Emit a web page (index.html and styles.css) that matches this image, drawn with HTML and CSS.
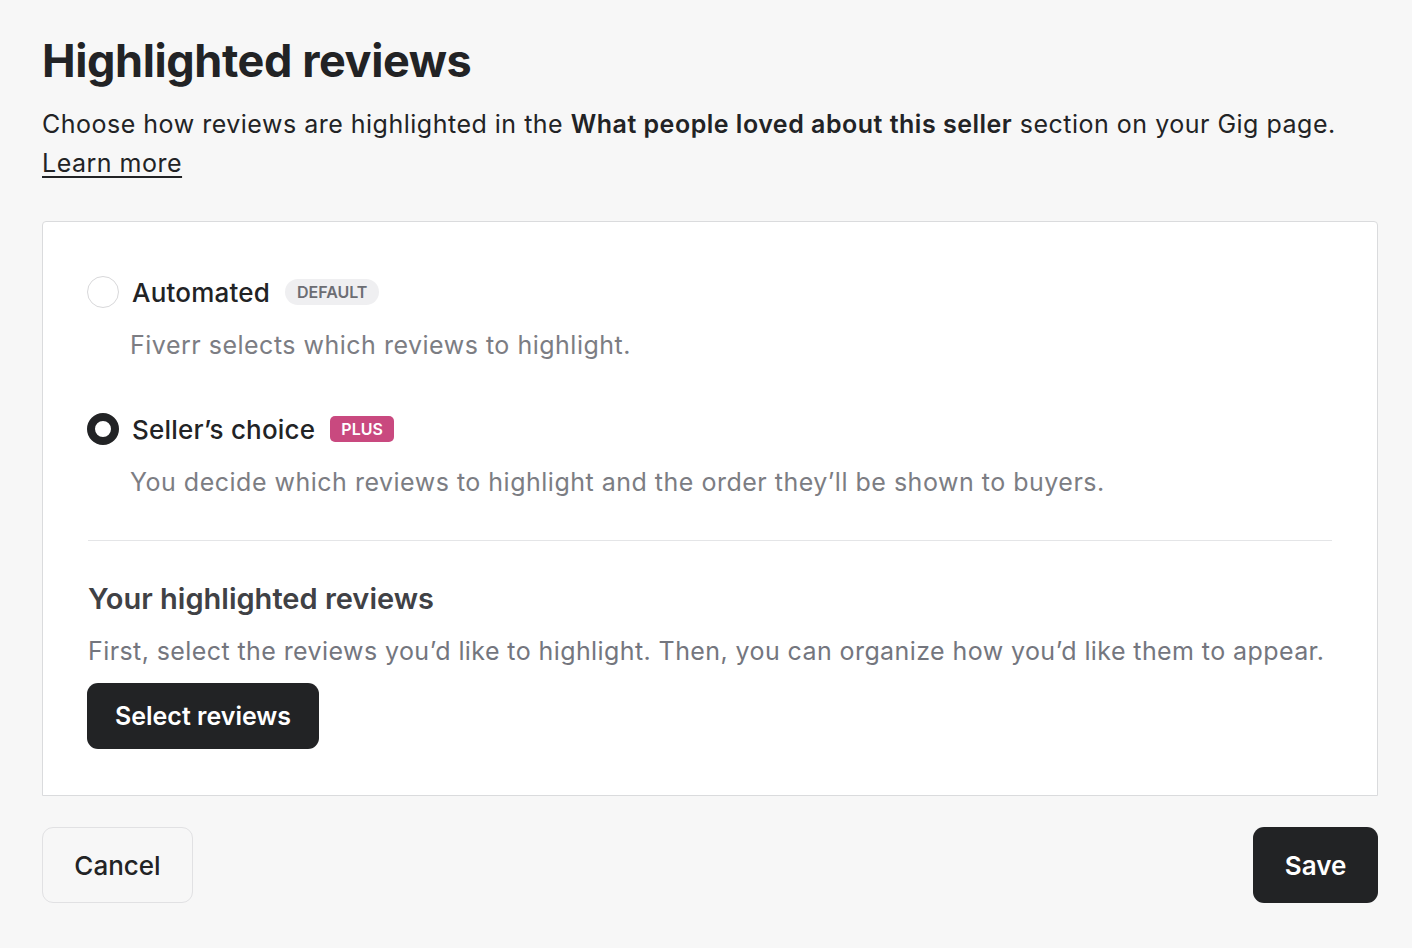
FILE: index.html
```html
<!DOCTYPE html>
<html lang="en">
<head>
<meta charset="utf-8">
<title>Highlighted reviews</title>
<link rel="stylesheet" href="styles.css">
</head>
<body>
<main class="page">
  <h1 class="title">Highlighted reviews</h1>
  <p class="intro">Choose how reviews are highlighted in the <strong>What people loved about this seller</strong> section on your Gig page.<br><a href="#" class="learn">Learn more</a></p>

  <section class="card">
    <div class="option">
      <div class="option-head">
        <span class="radio"></span>
        <span class="option-label">Automated</span>
        <span class="badge badge-default">DEFAULT</span>
      </div>
      <p class="option-desc">Fiverr selects which reviews to highlight.</p>
    </div>

    <div class="option option-second">
      <div class="option-head">
        <span class="radio radio-checked"></span>
        <span class="option-label">Seller’s choice</span>
        <span class="badge badge-plus">PLUS</span>
      </div>
      <p class="option-desc">You decide which reviews to highlight and the order they’ll be shown to buyers.</p>
    </div>

    <hr class="divider">

    <h2 class="sub-title">Your highlighted reviews</h2>
    <p class="sub-desc">First, select the reviews you’d like to highlight. Then, you can organize how you’d like them to appear.</p>
    <button class="btn btn-dark btn-select">Select reviews</button>
  </section>

  <footer class="actions">
    <button class="btn btn-light">Cancel</button>
    <button class="btn btn-dark btn-save">Save</button>
  </footer>
</main>
</body>
</html>
```

FILE: styles.css
```css
* { box-sizing: border-box; }

html, body {
  margin: 0;
  padding: 0;
  background: #f7f7f7;
}

body {
  font-family: Inter, "Noto Sans", "Liberation Sans", sans-serif;
  color: #222325;
}

.page {
  padding: 34px 34px 0 42px;
}

.title {
  margin: 0;
  font-size: 45px;
  line-height: 54px;
  font-weight: 700;
  letter-spacing: -0.4px;
  color: #222325;
}

.intro {
  margin: 17px 0 0;
  font-size: 25px;
  line-height: 39px;
  color: #222325;
  letter-spacing: 0.5px;
}

.intro strong {
  font-weight: 600;
}

.learn {
  color: #222325;
  text-decoration: underline;
  text-underline-offset: 4px;
}

.card {
  margin-top: 38px;
  background: #ffffff;
  border: 1px solid #dadbdd;
  border-radius: 4px 4px 0 0;
  padding: 54px 45px 46px;
}

.option-head {
  display: flex;
  align-items: center;
}

.radio {
  width: 32px;
  height: 32px;
  margin-left: -1px;
  border-radius: 50%;
  border: 1px solid #d8d8da;
  background: #fff;
  flex: 0 0 auto;
}

.radio-checked {
  border: 8px solid #222325;
}

.option-label {
  margin-left: 13px;
  font-size: 26px;
  font-weight: 500;
  letter-spacing: 0.2px;
  color: #222325;
}

.badge {
  margin-left: 15px;
  height: 26px;
  line-height: 26px;
  font-size: 16px;
  font-weight: 600;
  padding: 0 12px;
}

.badge-default {
  background: #efeff1;
  color: #6c6d73;
  border-radius: 13px;
}

.badge-plus {
  background: #c9497f;
  color: #ffffff;
  border-radius: 5px;
  padding: 0 11px;
}

.option-desc {
  margin: 20px 0 0 42px;
  font-size: 25px;
  line-height: 34px;
  color: #7c7d83;
  letter-spacing: 0.5px;
}

.option-second {
  margin-top: 51px;
}

.divider {
  margin: 41px 0 0;
  border: 0;
  border-top: 1px solid #e4e5e7;
}

.sub-title {
  margin: 40px 0 0;
  font-size: 29px;
  line-height: 36px;
  font-weight: 600;
  color: #404145;
}

.sub-desc {
  margin: 17px 0 0;
  font-size: 25px;
  line-height: 34px;
  color: #74767e;
  letter-spacing: 0.41px;
}

.btn {
  font-family: inherit;
  cursor: pointer;
  border-radius: 11px;
}

.btn-dark {
  background: #222325;
  color: #ffffff;
  border: 0;
  font-weight: 600;
}

.btn-select {
  margin-top: 15px;
  margin-left: -1px;
  height: 66px;
  padding: 0 28px;
  font-size: 25px;
}

.actions {
  margin-top: 31px;
  display: flex;
  justify-content: space-between;
}

.btn-light {
  background: #f7f7f7;
  border: 1px solid #e1e1e3;
  color: #222325;
  height: 76px;
  width: 151px;
  font-size: 26px;
  font-weight: 500;
}

.btn-save {
  height: 76px;
  width: 125px;
  font-size: 26px;
}
```
